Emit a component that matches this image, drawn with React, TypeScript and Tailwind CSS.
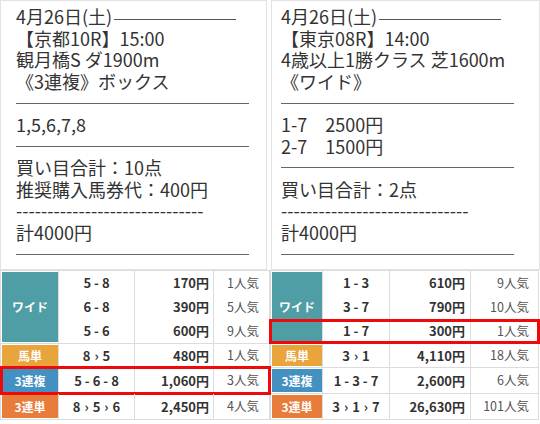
import type { ReactNode } from 'react';

const jp = "font-['Noto_Sans_CJK_JP','Noto_Sans',sans-serif]";

type Pick = { combo: string; amount: string; pop: string };
type Bet = Pick & { label: string; color: string; h: string; hit?: boolean };
type TableData = {
  cols: [string, string, string];
  wide: Pick[];
  wideHit?: number;
  bets: Bet[];
};

function Combo({ value }: { value: string }) {
  return (
    <span>
      {value.split('').map((c, i) =>
        c === '-' ? (
          <span key={i} className="mx-[3px]">-</span>
        ) : c === '>' ? (
          <span key={i} className="mx-[4px]">›</span>
        ) : (
          <span key={i}>{c}</span>
        ),
      )}
    </span>
  );
}

function Cells({ p, cols }: { p: Pick; cols: TableData['cols'] }) {
  return (
    <>
      <div className={`${cols[0]} flex items-center justify-center border-r border-[#dcdcdc] font-bold`}>
        <Combo value={p.combo} />
      </div>
      <div className={`${cols[1]} ${cols[2]} flex items-center justify-end border-r border-[#dcdcdc] font-bold`}>
        {p.amount}
      </div>
      <div className={`flex flex-1 items-center justify-end text-[12.5px] text-[#555] ${cols[2] === 'pr-[4px]' ? 'pr-[10px]' : 'pr-[9px]'}`}>
        {p.pop}
      </div>
    </>
  );
}

function Table({ data, labelW, className }: { data: TableData; labelW: string; className: string }) {
  const cols = data.cols;
  return (
    <div className={`${className} border border-[#dcdcdc] text-[13px] text-[#333] ${jp}`}>
      <div className="relative flex border-b border-[#dcdcdc]">
        <div className={`${labelW} border-r border-[#dcdcdc] py-px pl-px`}>
          <div className="flex h-full items-center justify-center bg-[#4f9ea6] text-[12px] font-bold text-white">ワイド</div>
        </div>
        <div className="flex-1">
          {data.wide.map((p, i) => (
            <div key={i} className="flex h-[24px]">
              <Cells p={p} cols={cols} />
            </div>
          ))}
        </div>
        {data.wideHit !== undefined && (
          <div className="absolute top-[48px] right-[-2px] left-[-2px] h-[25px] border-[3px] border-[#ee0a0a]" />
        )}
      </div>
      {data.bets.map((b, i) => (
        <div key={i} className={`relative flex ${b.h} ${i < data.bets.length - 1 ? 'border-b border-[#dcdcdc]' : ''}`}>
          <div className={`${labelW} border-r border-[#dcdcdc] py-px pl-px`}>
            <div className={`flex h-full items-center justify-center ${b.color} text-[12px] font-bold text-white`}>{b.label}</div>
          </div>
          <Cells p={b} cols={cols} />
          {b.hit && <div className="absolute top-[-2px] right-[-2px] bottom-[-2px] left-[-1px] border-[3px] border-[#ee0a0a]" />}
        </div>
      ))}
    </div>
  );
}

function Line({ children }: { children: ReactNode }) {
  return <div className="h-[21.6px] leading-[21.6px] whitespace-nowrap">{children}</div>;
}

function Rule() {
  return (
    <div className="flex h-[21.6px] items-center">
      <div className="h-px w-[233px] bg-[#666]" />
    </div>
  );
}

function Title() {
  return (
    <Line>
      4月26日(土)
      <span className="ml-[2px] inline-block h-px w-[122px] bg-[#555] align-middle" />
    </Line>
  );
}

const dashes = '------------------------------';

const left: TableData = {
  cols: ['w-[76px]', 'w-[79px]', 'pr-[4px]'],
  wide: [
    { combo: '5-8', amount: '170円', pop: '1人気' },
    { combo: '6-8', amount: '390円', pop: '5人気' },
    { combo: '5-6', amount: '600円', pop: '9人気' },
  ],
  bets: [
    { label: '馬単', color: 'bg-[#e9a43c]', h: 'h-[24px]', combo: '8>5', amount: '480円', pop: '1人気' },
    { label: '3連複', color: 'bg-[#4390c1]', h: 'h-[26px]', combo: '5-6-8', amount: '1,060円', pop: '3人気', hit: true },
    { label: '3連単', color: 'bg-[#e87c3b]', h: 'h-[25px]', combo: '8>5>6', amount: '2,450円', pop: '4人気' },
  ],
};

const right: TableData = {
  cols: ['w-[67px]', 'w-[81px]', 'pr-[5px]'],
  wide: [
    { combo: '1-3', amount: '610円', pop: '9人気' },
    { combo: '3-7', amount: '790円', pop: '10人気' },
    { combo: '1-7', amount: '300円', pop: '1人気' },
  ],
  wideHit: 2,
  bets: [
    { label: '馬単', color: 'bg-[#e9a43c]', h: 'h-[24px]', combo: '3>1', amount: '4,110円', pop: '18人気' },
    { label: '3連複', color: 'bg-[#4390c1]', h: 'h-[26px]', combo: '1-3-7', amount: '2,600円', pop: '6人気' },
    { label: '3連単', color: 'bg-[#e87c3b]', h: 'h-[25px]', combo: '3>1>7', amount: '26,630円', pop: '101人気' },
  ],
};

export default function App() {
  return (
    <div className={`flex h-[424px] w-[540px] overflow-hidden bg-white text-[18px] text-[#333] ${jp}`}>
      <div className="w-[270px]">
        <div className="h-[270px] w-[267px] border border-[#e3e3e3] pt-[5px] pl-[15px]">
          <Title />
          <Line>【京都10R】15:00</Line>
          <Line>観月橋S ダ1900m</Line>
          <Line>《3連複》ボックス</Line>
          <Rule />
          <Line>1,5,6,7,8</Line>
          <Rule />
          <Line>買い目合計：10点</Line>
          <Line>推奨購入馬券代：400円</Line>
          <Line>{dashes}</Line>
          <Line>計4000円</Line>
          <Rule />
        </div>
        <Table data={left} labelW="w-[58px]" className="w-[270px]" />
      </div>
      <div className="flex-1">
        <div className="ml-px h-[270px] border border-[#e3e3e3] pt-[5px] pl-[9px]">
          <Title />
          <Line>【東京08R】14:00</Line>
          <Line>4歳以上1勝クラス 芝1600m</Line>
          <Line>《ワイド》</Line>
          <Rule />
          <Line>1-7　2500円</Line>
          <Line>2-7　1500円</Line>
          <Rule />
          <Line>買い目合計：2点</Line>
          <Line>{dashes}</Line>
          <Line>計4000円</Line>
          <Rule />
        </div>
        <Table data={right} labelW="w-[52px]" className="w-[269px]" />
      </div>
    </div>
  );
}
